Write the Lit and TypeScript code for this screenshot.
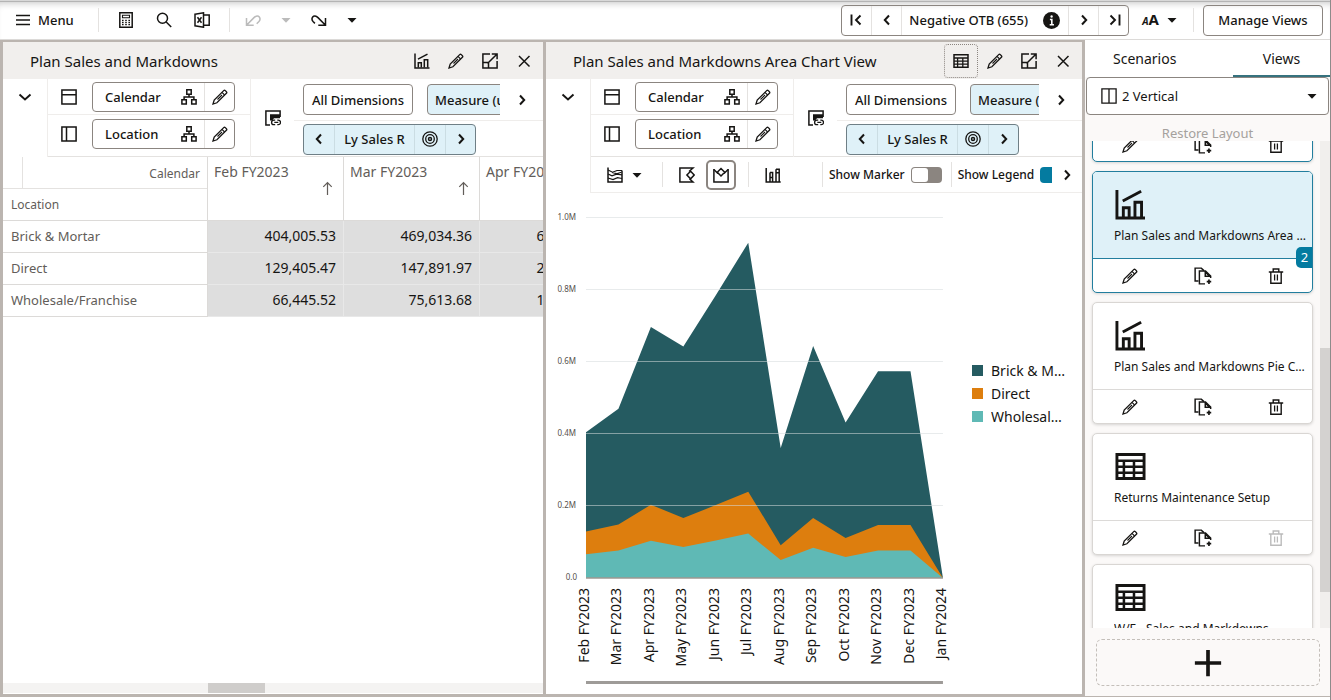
import { LitElement, html, svg, css, nothing } from "lit";
import { customElement, property, state } from "lit/decorators.js";
import { classMap } from "lit/directives/class-map.js";
import { styleMap } from "lit/directives/style-map.js";

const glyphs: Record<string, any> = {
  menu: svg`<path d="M1 3.5h14M1 8h14M1 12.5h14"/>`,
  calc: svg`<path d="M1.8 .8h12.4v14.4H1.8z"/><path d="M4.5 3.2h7v2.6h-7z" stroke-width="1.1"/><path d="M4 8.5h1.6M7.2 8.5h1.6M10.4 8.5H12M4 10.6h1.6M7.2 10.6h1.6M10.4 10.6H12M4 12.7h1.6M7.2 12.7h1.6M10.4 12.7H12" stroke-width="1.3"/>`,
  search: svg`<circle cx="6.5" cy="6.3" r="5"/><path d="M10.2 10l5 5"/>`,
  excel: svg`<path d="M1 2.2L9.5.8v14.4L1 13.8z"/><path d="M9.5 3h5.7v10.2H9.5M3.5 5.2l4 5.6M7.5 5.2l-4 5.6"/>`,
  undo: svg`<path d="M1.5 6v7.2h7.2M1.5 13.2L9 5.6c2-2 4.2-2 5.3-.6s.8 3.2-.6 4.8l-2 2"/>`,
  redo: svg`<path d="M14.5 6v7.2H7.3M14.5 13.2L7 5.6C5 3.600 2.800 3.600 1.700 5s-.8 3.200.6 4.800l1.600 1.600"/>`,
  caret: svg`<path d="M3.500 6h9L8 10.800z" fill="currentColor" stroke="none"/>`,
  first: svg`<path d="M2.500 2.500v11M11.500 3.500L7 8l4.500 4.500" stroke-width="1.900"/>`,
  last: svg`<path d="M13.500 2.500v11M4.500 3.500L9 8l-4.500 4.500" stroke-width="1.900"/>`,
  left: svg`<path d="M10 3.500L5.800 8l4.200 4.500" stroke-width="2"/>`,
  right: svg`<path d="M6 3.500L10.200 8 6 12.500" stroke-width="2"/>`,
  down: svg`<path d="M2.500 5.500L8 10.500l5.500-5" stroke-width="1.900"/>`,
  info: svg`<circle cx="8" cy="8" r="8" fill="currentColor" stroke="none"/><path d="M6.500 7h1.800v4.500M6.300 12h4" stroke="#fff" stroke-width="1.500"/><circle cx="8.100" cy="4.200" r="1.100" fill="#fff" stroke="none"/>`,
  chart: svg`<path d="M1 .5V15h14.500"/><path d="M4.300 14.500v-4.800h3v4.800M10.300 14.500V6.800h3.400v7.700"/><path d="M4 6.200L13.500 1.200"/>`,
  pencil: svg`<path d="M1 15l1.200-3.900L11.700 1.600q.8-.8 1.600 0l1.100 1.100q.8.800 0 1.600L4.900 13.800z" stroke-width="1.300"/><path d="M10 3.400l2.600 2.600M5.500 10.500l4.500-4.500" stroke-width="1.100"/>`,
  expand: svg`<path d="M8 .9H.9v14.200h14.200V8"/><path d="M.9 9.500h5.600v5.600M5.500 10.500L14.800 1.200M9.800.9h5.300v5.300"/>`,
  close: svg`<path d="M3 3l10.500 10.500M13.500 3L3 13.500"/>`,
  table: svg`<path d="M1 1.800h14v12.400H1z" stroke-width="1.500"/><path d="M1 5h14M1 8.100h14M1 11.200h14M4.600 5v9M9.800 5v9" stroke-width="1.300"/>`,
  columns: svg`<path d="M.9.900h14.200v14.200H.9zM.9 5.800h14.200"/>`,
  rows: svg`<path d="M.9.900h14.200v14.200H.9zM5.500.9v14.200"/>`,
  split: svg`<path d="M.9.900h14.200v14.200H.9zM8 .9v14.200" stroke-width="1.300"/>`,
  tree: svg`<path d="M5.800.8h4.400v4.400H5.800zM.9 10.700h4.400v4.400H.9zM10.700 10.700h4.400v4.400h-4.400zM8 5.200v2.800M3.100 10.700V8h9.800v2.700"/>`,
  link: svg`<path d="M5 15.100H.9V.9h14.200V7"/><path d="M5 4.200H15V8.200H9l-1.800 2.300H5z" fill="currentColor" stroke="none"/><path d="M10.200 10.200H8.800a2.200 2.200 0 000 4.400h1.400M12.300 10.200h1a2.200 2.200 0 010 4.400h-1M9.300 12.400h4" stroke-width="1.300"/>`,
  target: svg`<circle cx="8" cy="8" r="7.200" stroke-width="1.300"/><circle cx="8" cy="8" r="4.300" stroke-width="1.300"/><circle cx="8" cy="8" r="1.500"/>`,
  stream: svg`<path d="M1 .5V15h14V3.500"/><path d="M1 3l4.500 2.200L10 3.500h5M1 7l4 1.800 4.500-1.600 5.500.6M1 11l5 1.500 4.500-1.800 4.500.8M5 5.500l4.500 1.200 5-1.500" stroke-width="1.200"/>`,
  lasso: svg`<path d="M10 4.500L14 1H.9v14.100H14l-3.500-3.300"/><path d="M11.600 4.300l3.600 3.700-3.600 3.800L7.900 8z"/>`,
  area: svg`<path d="M.9 2v13.100h14.200V2"/><path d="M.9 2.500l4 4M15.100 2.500L11 6.500M8 1.500l3.700 3.700L8 9 4.300 5.200z"/>`,
  bars: svg`<path d="M1.200 1v14h14.500M5 5.500h2.600V15M5 15V5.500M11 2.200h3.200V15M11 15V2.200M5 10.500h2.600M11 5.800h3.200" stroke-width="1.500"/>`,
  copy: svg`<path d="M4 12.500H1V1h5.500l2.300 2.200" stroke-width="1.300"/><path d="M9.800 15H4.800V3.500h5.400l4.600 4.600v1.700M10 3.500v4.700h4.800" stroke-width="1.300"/><path d="M10 3.500l4.800 4.700-2.300-.3L10.300 5.500z" fill="currentColor" stroke="none"/><path d="M13.300 11v4M11.300 13h4" stroke-width="1.500"/>`,
  trash: svg`<path d="M.8 4h14.400M2.800 4v11.200h10.400V4M5.200 4V1h5.600v3" stroke-width="1.400"/><path d="M6.600 6.500v6M9.400 6.500v6" stroke-width="1.300"/>`,
  arrowUp: svg`<path d="M8 15V2M3.500 6.200L8 1.800l4.500 4.400" stroke-width="1.300"/>`,
  plus: svg`<path d="M8 .5v15M.5 8h15" stroke-width="2.100"/>`,
};

const icon = (name: string, size = 16) =>
  html`<svg class="ico" width=${size} height=${size} viewBox="0 0 16 16" fill="none" stroke="currentColor" stroke-width="1.500" aria-hidden="true">${glyphs[name]}</svg>`;

const base = css`
  :host { display: block; box-sizing: border-box; color: #161513; font-family: "Noto Sans", "Open Sans", sans-serif; font-size: 14px; line-height: 20px; }
  *, *::before { box-sizing: border-box; }
  button, select { font: inherit; color: inherit; background: none; border: 0; margin: 0; padding: 0; border-radius: 0; }
  button { display: flex; align-items: center; justify-content: center; white-space: nowrap; cursor: pointer; }
  button:disabled { color: #bbb; cursor: default; }
  .ico { display: block; flex: none; }
`;

@customElement("top-bar")
class TopBar extends LitElement {
  static styles = [base, css`
    .bar { display: flex; align-items: center; height: 40px; background: #fff; border-top: 1px solid #d8d8d8; border-bottom: 1px solid #dcdad8; box-shadow: inset 0 1px 0 #b4b4b4, inset 0 7px 7px -5px #c4c4c4; padding: 0 7px 0 15px; }
    .menu { gap: 7px; font-weight: 500; font-size: 13px; }
    .sep { width: 1px; height: 24px; background: #e4e2e0; }
    .sep.first { margin-left: 24px; }
    .tools { display: flex; padding: 0 8px; }
    .tools button { width: 38px; height: 32px; }
    .history { display: flex; padding-left: 7px; }
    .history button { width: 32px; height: 32px; }
    .history .drop { width: 34px; }
    .grow { flex: 1; }
    .pager { display: flex; align-items: center; height: 31px; border: 1px solid #8b8580; border-radius: 4px; }
    .pager button { width: 30px; height: 29px; }
    .pager .b { border-left: 1px solid #e4e2e0; }
    .pager .a { border-right: 1px solid #e4e2e0; }
    .alert { display: flex; align-items: center; font-size: 13px; font-weight: 500; gap: 15px; padding: 0 8px 0 7px; }
    .size { margin: 0 12px; font-weight: 700; gap: 5px; width: 40px; }
    .size .big { font-size: 15px; }
    .size .small { font-size: 10px; font-style: italic; }
    .manage { width: 120px; height: 31px; border: 1px solid #8b8580; border-radius: 4px; margin-left: 9px; font-size: 13px; font-weight: 500; }
  `];
  render() {
    return html`<header class="bar">
      <button class="menu">${icon("menu")}Menu</button>
      <span class="sep first"></span>
      <div class="tools">
        <button aria-label="Calculator">${icon("calc")}</button>
        <button aria-label="Search">${icon("search")}</button>
        <button aria-label="Export to spreadsheet">${icon("excel")}</button>
      </div>
      <span class="sep"></span>
      <div class="history">
        <button disabled aria-label="Undo">${icon("undo")}</button>
        <button class="drop" disabled aria-label="Undo list">${icon("caret")}</button>
        <button aria-label="Redo">${icon("redo")}</button>
        <button class="drop" aria-label="Redo list">${icon("caret")}</button>
      </div>
      <span class="grow"></span>
      <div class="pager">
        <button class="a" aria-label="First alert">${icon("first")}</button>
        <button class="a" aria-label="Previous alert">${icon("left")}</button>
        <span class="alert">Negative OTB (655) ${icon("info", 17)}</span>
        <button class="b" aria-label="Next alert">${icon("right")}</button>
        <button class="b" aria-label="Last alert">${icon("last")}</button>
      </div>
      <button class="size" aria-label="Text size"><span><span class="small">A</span><span class="big">A</span></span>${icon("caret")}</button>
      <span class="sep"></span>
      <button class="manage">Manage Views</button>
    </header>`;
  }
}

@customElement("pivot-panel")
class PivotPanel extends LitElement {
  @property() heading = "";
  @property() kind: "grid" | "chart" = "grid";
  @state() marker = false;
  @state() legend = true;
  static styles = [base, css`
    :host { display: flex; flex-direction: column; min-width: 0; min-height: 0; overflow: hidden; background: #fff; }
    .head { display: flex; align-items: center; height: 37px; flex: none; background: #f1efed; padding: 0 2px 0 27px; }
    h2 { flex: 1; margin: 0; font-size: 15px; font-weight: 400; white-space: nowrap; }
    .head button { width: 34px; height: 34px; border-radius: 4px; }
    .head .focus { border: 1px dotted #8b8580; }
    .pivot { display: grid; grid-template-columns: 44px minmax(0, 1fr); flex: none; }
    .toggle { height: 35px; }
    .main { border-left: 1px solid #efedeb; min-width: 0; }
    .dims { display: grid; grid-template-columns: 203px 43px minmax(0, 1fr); height: 78px; border-bottom: 1px solid #e4e2e0; }
    .axes { border-right: 1px solid #efedeb; }
    .axis { display: flex; align-items: center; gap: 15px; padding: 3px 0 2px 13px; height: 35px; }
    .axis + .axis { border-top: 1px solid #efedeb; height: 37px; }
    .tile { display: flex; align-items: center; width: 143px; height: 30px; border: 1px solid #8b8580; border-radius: 4px; }
    .tile .name { flex: 1; padding-left: 12px; font-size: 13px; font-weight: 500; }
    .tile .tree { width: 30px; height: 28px; }
    .tile .edit { width: 30px; height: 28px; border-left: 1px solid #e4e2e0; }
    .link { height: 78px; }
    .page { min-width: 0; }
    .line { display: flex; align-items: center; padding: 5px 0 5px 9px; height: 42px; border-bottom: 1px solid #efedeb; }
    .line + .line { border: 0; padding: 3px 0 2px 9px; height: 35px; }
    .clip { display: flex; gap: 14px; flex: 1; overflow: hidden; }
    .chip { flex: none; height: 31px; padding: 0 7px; border: 1px solid #8b8580; border-radius: 4px; font-size: 13px; font-weight: 500; }
    .chip.all { width: 110px; }
    .chip.on, .member { background: #dff1f8; }
    .next { width: 43px; height: 31px; }
    .member { display: flex; height: 31px; border: 1px solid #6f7f86; border-radius: 4px; }
    .member button { width: 30px; }
    .member .value { display: flex; align-items: center; justify-content: center; width: 81px; border: solid #cbdde3; border-width: 0 1px; font-size: 13px; font-weight: 500; }
    .member button:last-child { border-left: 1px solid #cbdde3; }

    .tools { display: flex; align-items: center; height: 36px; border-bottom: 1px solid #efedeb; }
    .strip { display: flex; align-items: center; flex: 1; overflow: hidden; height: 36px; }
    .strip > * { flex: none; }
    .strip button { width: 30px; height: 30px; border-radius: 5px; }
    .strip .type { width: 50px; gap: 6px; justify-content: flex-start; margin-left: 16px; }
    .strip .picked { border: 2px solid #8b8580; margin-left: 4px; }
    .strip .alone { margin: 0 34px 0 9px; }
    .rule { width: 1px; height: 25px; background: #e4e2e0; }
    .rule.wide { margin: 0 9px 0 5px; }
    .rule.near { margin-left: 12px; }
    .switch { display: flex; align-items: center; gap: 6px; padding: 0 9px 0 6px; font-size: 12px; font-weight: 500; white-space: nowrap; }
    .switch input { appearance: none; width: 31px; height: 16px; margin: 0; border-radius: 4px; background: #8b8580; display: flex; }
    .switch input::before { content: ""; width: 16px; height: 14px; margin: 1px; border-radius: 3px; background: #fff; }
    .switch input:checked { background: #047ba0; justify-content: flex-end; }
    .tools .more { width: 30px; height: 30px; }

    .sheet { flex: 1; min-height: 0; overflow: hidden; display: flex; flex-direction: column; justify-content: space-between; }
    table { border-collapse: separate; border-spacing: 0; table-layout: fixed; width: 613px; margin-top: -1px; }
    th, td { padding: 0; border: solid #dcdad8; border-width: 0 1px 1px 0; }
    th { font-weight: 400; color: #625d59; text-align: left; }
    .corner { border-top-width: 1px; }
    .cal { display: flex; height: 32px; border-bottom: 1px solid #e4e2e0; }
    .cal::before { content: ""; width: 20px; border-right: 1px solid #e4e2e0; }
    .cal span { flex: 1; text-align: right; padding: 7px 7px 0 0; font-size: 12px; }
    .loc { height: 31px; padding: 7px 8px; font-size: 12px; line-height: 18px; }
    .col { border-top-width: 1px; }
    .period { display: flex; flex-direction: column; height: 63px; padding: 5px 9px 0 6px; white-space: nowrap; font-size: 14px; line-height: 19px; }
    .period .ico { align-self: flex-end; margin-right: -1px; }
    tbody th { padding: 0 8px 2px; font-size: 13px; }
    tbody tr { height: 32px; }
    td { background: #dedede; border-color: #e8e8e8; text-align: right; padding: 0 7px 2px 0; font-size: 14px; }
    .hscroll { height: 10px; margin-bottom: 1px; background: #f4f3f2; }
    .hthumb { height: 10px; background: #cfcdcb; }

    .plot { flex: 1; min-height: 0; display: flex; align-items: flex-start; padding-top: 1px; }
    .plot svg { flex: 1; min-width: 0; display: block; }
    .tick { font-size: 8px; fill: #55504c; text-anchor: end; }
    .month { font-size: 14px; fill: #161513; text-anchor: end; }
    ul { list-style: none; margin: 0; width: 122px; padding: 165px 16px 0 12px; font-size: 14px; line-height: 23px; }
    li { display: flex; align-items: center; gap: 8px; }
    li span { overflow: hidden; text-overflow: ellipsis; white-space: nowrap; }
    li i { width: 11px; height: 11px; flex: none; }
  `];

  axis(name: string, shape: string) {
    return html`<div class="axis">${icon(shape)}
      <div class="tile"><span class="name">${name}</span>
        <button class="tree" aria-label="${name} hierarchy">${icon("tree")}</button>
        <button class="edit" aria-label="Edit ${name}">${icon("pencil")}</button></div></div>`;
  }

  grid() {
    const months = ["Feb FY2023", "Mar FY2023", "Apr FY2023"];
    const rows = [
      ["Brick & Mortar", "404,005.53", "469,034.36", "695,213.48"],
      ["Direct", "129,405.47", "147,891.97", "203,118.20"],
      ["Wholesale/Franchise", "66,445.52", "75,613.68", "102,347.91"],
    ];
    return html`<div class="sheet"><table>
        <colgroup><col style=${styleMap({ width: "205px" })}>${months.map(() => html`<col style=${styleMap({ width: "136px" })}>`)}</colgroup>
        <thead><tr><th class="corner"><div class="cal"><span>Calendar</span></div><div class="loc">Location</div></th>
          ${months.map((m) => html`<th class="col" scope="col"><div class="period">${m}${icon("arrowUp", 15)}</div></th>`)}</tr></thead>
        <tbody>${rows.map(([name, ...v]) => html`<tr><th scope="row">${name}</th>${v.map((x) => html`<td>${x}</td>`)}</tr>`)}</tbody>
      </table>
      <div class="hscroll"><div class="hthumb" style=${styleMap({ width: "10.500%", marginLeft: "38%" })}></div></div></div>`;
  }

  chart() {
    const months = ["Feb FY2023", "Mar FY2023", "Apr FY2023", "May FY2023", "Jun FY2023", "Jul FY2023", "Aug FY2023", "Sep FY2023", "Oct FY2023", "Nov FY2023", "Dec FY2023", "Jan FY2024"];
    const series = [
      { name: "Brick & Mortar", color: "#255b61", v: [404, 469, 695, 641, 783, 929, 360, 643, 431, 573, 573, 0] },
      { name: "Direct", color: "#dd7e0e", v: [129, 148, 203, 166, 202, 239, 91, 166, 111, 147, 147, 0] },
      { name: "Wholesale/Franchise", color: "#5fb9b5", v: [66, 76, 103, 86, 104, 123, 50, 84, 58, 76, 76, 0] },
    ];
    const left = 40, step = 32.45, zero = 384, unit = 0.361;
    const x = (i: number) => left + i * step;
    const y = (v: number) => zero - v * unit;
    const right = x(11);
    return html`<div class="plot">
      <svg viewBox="0 0 414 500" role="img" aria-label="Sales by month">
        ${series.map((s) => svg`<polygon fill=${s.color} points=${`${left},${zero} ${s.v.map((v, i) => `${x(i)},${y(v)}`).join(" ")} ${right},${zero}`}></polygon>`)}
        ${[1000, 800, 600, 400, 200].map((t) => svg`<line x1=${left} x2=${right} y1=${23.5 + (1000 - t) * 0.36} y2=${23.5 + (1000 - t) * 0.36} stroke="#d6dbdd" stroke-opacity=".55"></line>
          <text class="tick" x="30" y=${26 + (1000 - t) * 0.36}>${(t / 1000).toFixed(1)}M</text>`)}
        <line x1=${left} x2=${right} y1="384" y2="384" stroke="#9e9892" stroke-width="1.500"></line>
        <text class="tick" x="31" y="386">0.0</text>
        ${months.map((m, i) => svg`<text class="month" transform=${`translate(${x(i) + 3} 394) rotate(-90)`}>${m}</text>`)}
        <rect x=${left} y="487" width=${right - left} height="3" fill="#9e9b98"></rect>
      </svg>
      ${this.legend ? html`<ul>${series.map((s) => html`<li><i style=${styleMap({ background: s.color })}></i><span>${s.name}</span></li>`)}</ul>` : nothing}
    </div>`;
  }

  render() {
    const chart = this.kind === "chart";
    return html`
      <div class="head"><h2>${this.heading}</h2>
        <button class=${classMap({ focus: chart })} aria-label="Switch view">${icon(chart ? "table" : "chart")}</button>
        <button aria-label="Edit view">${icon("pencil")}</button>
        <button aria-label="Maximize">${icon("expand")}</button>
        <button aria-label="Close">${icon("close")}</button>
      </div>
      <div class="pivot">
        <button class="toggle" aria-label="Collapse dimensions">${icon("down")}</button>
        <div class="main">
          <div class="dims">
            <div class="axes">${this.axis("Calendar", "columns")}${this.axis("Location", "rows")}</div>
            <button class="link" aria-label="Link pages">${icon("link")}</button>
            <div class="page">
              <div class="line"><div class="clip"><button class="chip all">All Dimensions</button><button class="chip on">Measure (unlinked)</button></div>
                <button class="next" aria-label="More dimensions">${icon("right")}</button></div>
              <div class="line"><div class="member">
                <button aria-label="Previous measure">${icon("left")}</button><span class="value">Ly Sales R</span>
                <button aria-label="Find measure">${icon("target")}</button><button aria-label="Next measure">${icon("right")}</button></div></div>
            </div>
          </div>
          ${chart ? html`<div class="tools"><div class="strip">
              <button class="type" aria-label="Chart type">${icon("stream")}${icon("caret")}</button>
              <span class="rule wide"></span>
              <button aria-label="Lasso select">${icon("lasso")}</button>
              <button class="picked" aria-label="Area select">${icon("area")}</button>
              <span class="rule near"></span>
              <button class="alone" aria-label="Bar options">${icon("bars")}</button>
              <span class="rule"></span>
              <label class="switch">Show Marker<input type="checkbox" role="switch" .checked=${this.marker} @change=${() => (this.marker = !this.marker)}></label>
              <span class="rule"></span>
              <label class="switch">Show Legend<input type="checkbox" role="switch" .checked=${this.legend} @change=${() => (this.legend = !this.legend)}></label>
            </div><button class="more" aria-label="More options">${icon("right")}</button></div>` : nothing}
        </div>
      </div>
      ${chart ? this.chart() : this.grid()}`;
  }
}

@customElement("view-sidebar")
class ViewSidebar extends LitElement {
  static styles = [base, css`
    :host { display: flex; flex-direction: column; min-height: 0; background: #fbf9f8; border-bottom: 1px solid #bbb5b0; }
    .tabs { display: flex; height: 37px; flex: none; background: #fff; font-size: 14px; }
    .tabs button { flex: 1; justify-content: flex-start; padding-left: 28px; }
    .tabs .on { flex: none; width: 97px; padding: 0; justify-content: center; border-bottom: 2px solid #36727e; padding-top: 2px; }
    .layout { display: grid; grid-template-columns: 37px minmax(0, 1fr) 34px; align-items: center; height: 38px; flex: none; margin: 0 1px; }
    .layout > * { grid-row: 1; }
    .layout select { grid-column: 1 / -1; height: 38px; padding-left: 35px; background: #fff; border: 1px solid #8b8580; border-radius: 4px; appearance: none; font-size: 13px; }
    .layout .ico { pointer-events: none; }
    .layout .mark { grid-column: 1; justify-self: end; padding-right: 6px; z-index: 1; pointer-events: none; }
    .layout .drop { grid-column: 3; z-index: 1; justify-self: center; pointer-events: none; }
    .restore { height: 26px; flex: none; padding-top: 10px; font-size: 13px; }
    .restore:disabled { color: #a5a19d; }
    .scroll { display: flex; flex: 1; min-height: 0; }
    .list { flex: 1; min-width: 0; overflow: hidden; padding: 0 7px; }
    .card { position: relative; display: grid; grid-template-columns: minmax(0, 1fr); grid-template-rows: 87px 33px; height: 122px; margin-bottom: 9px; background: #fff; border: 1px solid #d9d6d3; border-radius: 5px; box-shadow: 0 1px 3px #00000026; overflow: hidden; }
    .info { padding: 17px 6px 0 21px; border-bottom: 1px solid #dcdad8; }
    .info .ico { margin-left: 1px; }
    .info p { margin: 7px 0 0; font-size: 12px; line-height: 18px; overflow: hidden; text-overflow: ellipsis; white-space: nowrap; }
    .acts { display: grid; grid-template-columns: repeat(3, 1fr); }
    .sel { border-color: #227e9e; }
    .sel .info { background: #dff1f8; border-color: #227e9e; }
    .badge { position: absolute; right: -1px; top: 75px; width: 17px; height: 21px; border-radius: 5px 0 0 5px; background: #047ba0; color: #fff; font-size: 13px; line-height: 21px; text-align: center; }
    .track { width: 10px; background: #f1efed; }
    .thumb { background: #d4d2d0; }
    .add { height: 47px; flex: none; margin: 11px 10px 10px 11px; border: 1px dashed #c4bfba; border-radius: 6px; }
  `];
  updated() {
    this.renderRoot.querySelector(".list")!.scrollTop = 101;
  }
  render() {
    const cards = [
      { title: "Plan Sales and Markdowns", kind: "table", badge: 1 },
      { title: "Plan Sales and Markdowns Area Chart View", kind: "chart", badge: 2 },
      { title: "Plan Sales and Markdowns Pie Chart View", kind: "chart" },
      { title: "Returns Maintenance Setup", kind: "table", locked: true },
      { title: "W/F - Sales and Markdowns", kind: "table" },
    ];
    return html`
      <div class="tabs" role="tablist"><button role="tab">Scenarios</button><button role="tab" aria-selected="true" class="on">Views</button></div>
      <div class="layout">
        <select aria-label="Layout"><option>2 Vertical</option></select>
        <span class="mark">${icon("split")}</span><span class="drop">${icon("caret")}</span>
      </div>
      <button class="restore" disabled>Restore Layout</button>
      <div class="scroll">
        <div class="list">${cards.map((c) => html`<article class=${classMap({ card: true, sel: !!c.badge })}>
          <div class="info">${icon(c.kind, 31)}<p>${c.title}</p></div>
          <div class="acts"><button aria-label="Edit">${icon("pencil")}</button><button aria-label="Duplicate">${icon("copy", 18)}</button><button aria-label="Delete" ?disabled=${!!c.locked}>${icon("trash")}</button></div>
          ${c.badge ? html`<span class="badge">${c.badge}</span>` : nothing}
        </article>`)}</div>
        <div class="track"><div class="thumb" style=${styleMap({ marginTop: "2070%", height: "50%" })}></div></div>
      </div>
      <button class="add" aria-label="Add view">${icon("plus", 28)}</button>`;
  }
}

@customElement("app-root")
class AppRoot extends LitElement {
  static styles = [base, css`
    :host { display: flex; flex-direction: column; height: 100vh; background: #fff; border-right: 1px solid #8d8b8a; padding-bottom: 3px; }
    main { flex: 1; min-height: 0; display: grid; grid-template-columns: minmax(0, 1fr) 245px; background: #bbb5b0; }
    .panes { display: grid; grid-template-columns: minmax(0, 540fr) minmax(0, 536fr); gap: 3px; padding: 2px 3px 3px; min-height: 0; }
  `];
  render() {
    return html`<top-bar></top-bar>
      <main>
        <div class="panes">
          <pivot-panel heading="Plan Sales and Markdowns" kind="grid"></pivot-panel>
          <pivot-panel heading="Plan Sales and Markdowns Area Chart View" kind="chart"></pivot-panel>
        </div>
        <view-sidebar></view-sidebar>
      </main>`;
  }
}
